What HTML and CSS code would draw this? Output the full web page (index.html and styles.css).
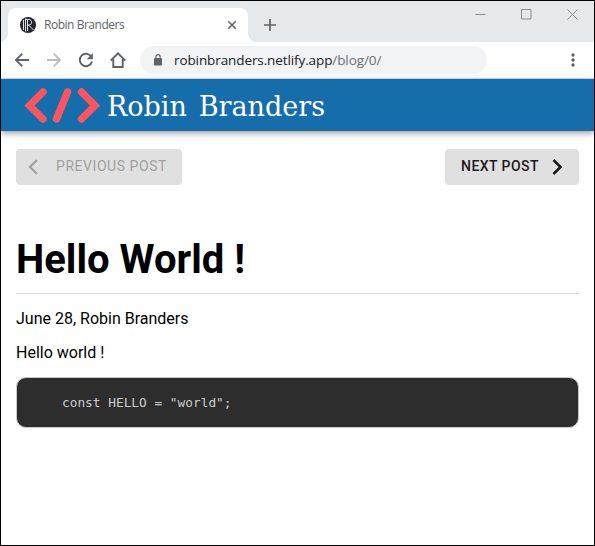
FILE: index.html
```html
<!DOCTYPE html>
<html lang="en">
<head>
<meta charset="utf-8">
<title>Robin Branders</title>
<link rel="stylesheet" href="styles.css">
</head>
<body>
<div class="window">
  <div class="tabstrip">
    <div class="tab">
      <svg class="favicon" width="16" height="16" viewBox="0 0 16 16">
        <circle cx="8" cy="8" r="8" fill="#22282d"/>
        <g fill="none" stroke="#dfe3e5" stroke-width="1"><path d="M3.500 3v10M5.500 1.500v13M7.500 2v12M5.500 2.500h3.500c3.500 0 3.500 5.500 0 5.500h-1.500M8.500 8l5 5"/></g>
      </svg>
      <span class="tab-title">Robin Branders</span>
      <svg class="tab-close" width="10" height="10" viewBox="0 0 10 10"><path d="M1.200 1.200l7.600 7.600M8.800 1.200L1.200 8.800" stroke="#5f6368" stroke-width="1.600"/></svg>
    </div>
    <svg class="new-tab" width="12" height="12" viewBox="0 0 12 12"><path d="M6 0v12M0 6h12" stroke="#5f6368" stroke-width="1.700"/></svg>
    <div class="controls">
      <svg width="11" height="11" viewBox="0 0 11 11"><path d="M.5 5.500h10" stroke="#8a8d90"/></svg>
      <svg width="11" height="11" viewBox="0 0 11 11"><path d="M.5 .5h9.500v9.500H.5z" stroke="#8a8d90" fill="none"/></svg>
      <svg width="11" height="11" viewBox="0 0 11 11"><path d="M.5 .5l10 10M10.500 .5l-10 10" stroke="#8a8d90"/></svg>
    </div>
  </div>
  <div class="toolbar">
    <div class="nav-icons">
      <svg width="16" height="16" viewBox="0 0 16 16" fill="none" stroke="#5f6368" stroke-width="1.800"><path d="M15 8H2M8.300 1.600L1.900 8l6.400 6.400"/></svg>
      <svg width="16" height="16" viewBox="0 0 16 16" fill="none" stroke="#bcbec0" stroke-width="1.800"><path d="M1 8h13M7.700 1.600L14.100 8l-6.400 6.400"/></svg>
      <svg width="16" height="16" viewBox="0 0 16 16"><path d="M13.300 4.800A6.200 6.200 0 1 0 14 9.500" fill="none" stroke="#5f6368" stroke-width="1.900"/><path d="M14.900 1v6.200H8.700z" fill="#5f6368"/></svg>
      <svg width="16" height="16" viewBox="0 0 16 16" fill="none" stroke="#5f6368" stroke-width="1.900"><path d="M.7 8.600L8 1.300l7.300 7.300M3.300 7v8h9.400V7"/></svg>
    </div>
    <div class="omnibox">
      <svg class="lock" width="8" height="12" viewBox="0 0 8 12"><rect y="4" width="8" height="7.500" rx="1" fill="#5f6368"/><path d="M1.900 4.500V2.800a2.100 2.100 0 0 1 4.200 0v1.700" fill="none" stroke="#5f6368" stroke-width="1.200"/></svg>
      <span class="url">robinbranders.netlify.app<span class="path">/blog/0/</span></span>
    </div>
    <svg class="menu" width="4" height="14" viewBox="0 0 4 14" fill="#5f6368"><circle cx="2" cy="2" r="1.700"/><circle cx="2" cy="7" r="1.700"/><circle cx="2" cy="12" r="1.700"/></svg>
  </div>
  <header class="site-header">
    <svg width="310" height="52" viewBox="0 0 310 52" role="img">
      <g fill="none" stroke="#fa5560" stroke-width="7.400" stroke-linecap="round" stroke-linejoin="miter"><path d="M19 13L5.500 26.500 19 40M43.500 13L32.500 40M57.500 13L71 26.500 57.500 40"/></g>
      <text class="brand" x="83" y="37" textLength="218" lengthAdjust="spacingAndGlyphs">Robin Branders</text>
    </svg>
  </header>
  <main class="content">
    <nav class="post-nav">
      <button class="button previous" disabled>
        <svg width="10" height="16" viewBox="0 0 10 16"><path d="M9 1L2 8l7 7" fill="none" stroke="currentColor" stroke-width="2.200"/></svg>
        <span>PREVIOUS POST</span>
      </button>
      <button class="button next">
        <span>NEXT POST</span>
        <svg width="11" height="16" viewBox="0 0 11 16"><path d="M1.500 1l7 7-7 7" fill="none" stroke="currentColor" stroke-width="2.600"/></svg>
      </button>
    </nav>
    <h1>Hello World !</h1>
    <p class="meta">June 28, Robin Branders</p>
    <p>Hello world !</p>
    <pre><code>const HELLO = "world";</code></pre>
  </main>
</div>
</body>
</html>
```

FILE: styles.css
```css
* { box-sizing: border-box; }
body { margin: 0; background: #fff; }
svg { display: block; flex: none; }

.window {
  height: 546px;
  border: 1px solid #000;
  overflow: hidden;
  color: #000;
  font-family: Roboto, "Liberation Sans", sans-serif;
}

.tabstrip {
  display: flex;
  height: 41px;
  padding-left: 7px;
  background: #e5e9ec;
}
.tab {
  position: relative;
  display: flex;
  align-items: center;
  width: 240px;
  height: 34px;
  margin-top: 7px;
  padding: 0 11px 0 12px;
  border-radius: 8px 8px 0 0;
  background: #fff;
}
.tab::before,
.tab::after {
  content: "";
  position: absolute;
  bottom: 0;
  width: 8px;
  height: 8px;
}
.tab::before { left: -8px; background: radial-gradient(circle at 0 0, transparent 7.5px, #fff 8px); }
.tab::after { right: -8px; background: radial-gradient(circle at 100% 0, transparent 7.5px, #fff 8px); }
.tab-title {
  flex: 1;
  margin-left: 8px;
  color: #5f6368;
  font: 12px/16px "Open Sans", "Noto Sans", sans-serif;
  letter-spacing: -0.47px;
}
.new-tab { margin: 18px 0 0 16px; }
.controls {
  display: flex;
  gap: 35px;
  margin: 8px 16px 0 auto;
}

.toolbar {
  display: flex;
  align-items: center;
  height: 37px;
  padding: 0 19px 1px 13px;
  border-bottom: 1px solid #d7dade;
}
.nav-icons { display: flex; gap: 16px; }
.omnibox {
  display: flex;
  align-items: center;
  width: 347px;
  height: 28px;
  margin-left: 14px;
  padding-left: 14px;
  border-radius: 14px;
  background: #f1f3f4;
}
.url {
  margin-left: 12px;
  color: #202124;
  font: 13.5px/20px "Open Sans", "Noto Sans", sans-serif;
  letter-spacing: -0.1px;
  white-space: nowrap;
}
.path { color: #6b6f74; }
.menu { margin-left: auto; }

.site-header {
  height: 52px;
  padding-left: 23px;
  background: #166dac;
  box-shadow: 0 2px 4px -1px rgba(0,0,0,.2), 0 4px 5px rgba(0,0,0,.14), 0 1px 10px rgba(0,0,0,.12);
}
.brand {
  fill: #fff;
  font: 28px "DejaVu Serif Condensed", "DejaVu Serif", serif;
  font-stretch: condensed;
  word-spacing: 3px;
}

.content { padding: 18px 15px 0; }
.post-nav { display: flex; justify-content: space-between; }
.button {
  display: flex;
  align-items: center;
  height: 36px;
  border: 0;
  border-radius: 4px;
  background: #e0e0e0;
  color: #1b1b1b;
  font: 500 14px/20px Roboto, sans-serif;
  letter-spacing: .45px;
  white-space: nowrap;
}
.previous { width: 166px; padding: 0 0 2px 12px; gap: 18px; color: #a0a0a0; font-weight: 400; letter-spacing: .55px; }
.next { width: 134px; padding: 0 16px 2px; justify-content: space-between; }
.button svg { position: relative; top: 1px; }

h1 {
  height: 63px;
  margin: 46px 0 15px;
  padding-top: 1px;
  border-bottom: 1px solid #dcdcdc;
  font-size: 40px;
  font-weight: 700;
  line-height: 56px;
}
p {
  margin: 0 0 15px;
  font-size: 16px;
  line-height: 19px;
}
pre {
  height: 51px;
  margin: 0;
  padding: 16px 45px;
  border: 1px solid #c9c9c9;
  border-radius: 10px;
  background: #2d2d2d;
  color: #ccc;
  line-height: 18px;
}
code { font: 12.8px/18px "DejaVu Sans Mono", monospace; }
```
